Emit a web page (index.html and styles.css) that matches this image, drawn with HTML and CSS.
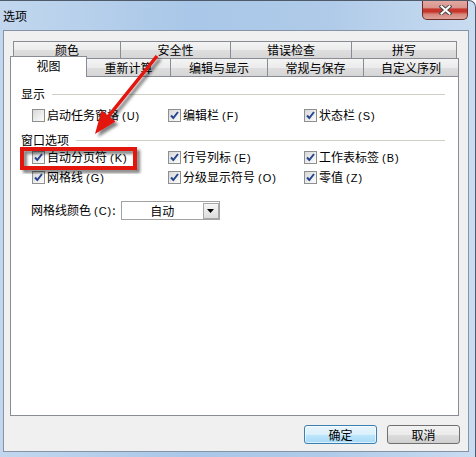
FILE: index.html
```html
<!DOCTYPE html>
<html lang="zh-CN">
<head>
<meta charset="utf-8">
<title>选项</title>
<link rel="stylesheet" href="styles.css">
</head>
<body>
<div class="window">
  <div class="titlebar">
    <span class="title">选项</span>
    <div class="close">
      <svg width="13" height="10" viewBox="0 0 13 10">
        <path d="M2.5 1.5 L10.5 8.5 M10.5 1.5 L2.5 8.5" stroke="#4a4a4a" stroke-width="4" stroke-linecap="square"/>
        <path d="M2.5 1.5 L10.5 8.5 M10.5 1.5 L2.5 8.5" stroke="#fff" stroke-width="2" stroke-linecap="square"/>
      </svg>
    </div>
  </div>
  <div class="client">
    <div class="tabs">
      <div class="row-back">
        <div class="tab">颜色</div>
        <div class="tab">安全性</div>
        <div class="tab">错误检查</div>
        <div class="tab">拼写</div>
      </div>
      <div class="row-front">
        <div class="tab active">视图</div>
        <div class="tab">重新计算</div>
        <div class="tab">编辑与显示</div>
        <div class="tab">常规与保存</div>
        <div class="tab">自定义序列</div>
      </div>
      <div class="panel">
        <div class="heading"><span>显示</span><span class="rule"></span></div>
        <div class="cbrow first">
          <label class="cb"><span class="box"></span><span class="txt">启动任务窗格<span class="key">(U)</span></span></label>
          <label class="cb"><span class="box"><svg width="11" height="11" viewBox="0 0 11 11"><path d="M2 5.5 L4.3 8 L9 2" fill="none" stroke="#26458f" stroke-width="2"/></svg></span><span class="txt">编辑栏<span class="key">(F)</span></span></label>
          <label class="cb"><span class="box"><svg width="11" height="11" viewBox="0 0 11 11"><path d="M2 5.5 L4.3 8 L9 2" fill="none" stroke="#26458f" stroke-width="2"/></svg></span><span class="txt">状态栏<span class="key">(S)</span></span></label>
        </div>
        <div class="heading second"><span>窗口选项</span><span class="rule"></span></div>
        <div class="cbrow">
          <label class="cb"><span class="box"><svg width="11" height="11" viewBox="0 0 11 11"><path d="M2 5.5 L4.3 8 L9 2" fill="none" stroke="#26458f" stroke-width="2"/></svg></span><span class="txt">自动分页符<span class="key">(K)</span></span></label>
          <label class="cb"><span class="box"><svg width="11" height="11" viewBox="0 0 11 11"><path d="M2 5.5 L4.3 8 L9 2" fill="none" stroke="#26458f" stroke-width="2"/></svg></span><span class="txt">行号列标<span class="key">(E)</span></span></label>
          <label class="cb"><span class="box"><svg width="11" height="11" viewBox="0 0 11 11"><path d="M2 5.5 L4.3 8 L9 2" fill="none" stroke="#26458f" stroke-width="2"/></svg></span><span class="txt">工作表标签<span class="key">(B)</span></span></label>
        </div>
        <div class="cbrow">
          <label class="cb"><span class="box"><svg width="11" height="11" viewBox="0 0 11 11"><path d="M2 5.5 L4.3 8 L9 2" fill="none" stroke="#26458f" stroke-width="2"/></svg></span><span class="txt">网格线<span class="key">(G)</span></span></label>
          <label class="cb"><span class="box"><svg width="11" height="11" viewBox="0 0 11 11"><path d="M2 5.5 L4.3 8 L9 2" fill="none" stroke="#26458f" stroke-width="2"/></svg></span><span class="txt">分级显示符号<span class="key">(O)</span></span></label>
          <label class="cb"><span class="box"><svg width="11" height="11" viewBox="0 0 11 11"><path d="M2 5.5 L4.3 8 L9 2" fill="none" stroke="#26458f" stroke-width="2"/></svg></span><span class="txt">零值<span class="key">(Z)</span></span></label>
        </div>
        <div class="gridcolor">
          <span class="txt">网格线颜色<span class="key">(C)</span>:</span>
          <div class="select">
            <span class="val">自动</span>
            <span class="drop"><svg width="7" height="4" viewBox="0 0 7 4"><path d="M0 0 H7 L3.5 4 Z" fill="#000"/></svg></span>
          </div>
        </div>
      </div>
    </div>
    <div class="buttons">
      <div class="btn default">确定</div>
      <div class="btn">取消</div>
    </div>
  </div>
  <svg class="overlay" width="476" height="457" viewBox="0 0 476 457">
    <defs>
      <filter id="sh" x="-20%" y="-20%" width="150%" height="150%">
        <feDropShadow dx="3" dy="3" stdDeviation="1.6" flood-color="#000" flood-opacity="0.5"/>
      </filter>
    </defs>
    <rect x="22" y="149" width="113" height="19" fill="none" stroke="#e3120f" stroke-width="4" filter="url(#sh)"/>
    <g filter="url(#sh)">
      <line x1="157" y1="56" x2="107" y2="118" stroke="#e3120f" stroke-width="3.5"/>
      <polygon points="95,134 115.5,121.5 101.5,110.5" fill="#e3120f"/>
    </g>
  </svg>
</div>
</body>
</html>
```
FILE: styles.css
```css
body {
  margin: 0;
  font-family: "Noto Sans CJK SC", "Liberation Sans", sans-serif;
  font-size: 12px;
  line-height: 14px;
  color: #000;
}

.window {
  position: relative;
  width: 476px;
  height: 457px;
  box-sizing: border-box;
  display: flex;
  flex-direction: column;
  background: linear-gradient(90deg, #c2d7ee 0%, #a9c7e8 40%, #b0cbe9 70%, #c9dcf1 100%);
  border-top: 1px solid #4f5b6a;
  border-right: 1px solid #4f5b6a;
  border-radius: 0 7px 0 0;
  overflow: hidden;
}

.titlebar {
  height: 29px;
  display: flex;
  justify-content: space-between;
  align-items: flex-start;
}

.title {
  margin: 8px 0 0 3px;
  font-size: 12px;
  line-height: 14px;
}

.close {
  width: 46px;
  height: 20px;
  margin: -1px 7px 0 0;
  box-sizing: border-box;
  border: 1px solid #6d2c27;
  border-top: none;
  border-radius: 0 0 5px 5px;
  background: linear-gradient(#e4aca5 0%, #d9968e 40%, #c8352b 48%, #c5342a 62%, #d6877e 75%, #dea199 100%);
  display: flex;
  align-items: center;
  justify-content: center;
}

.close svg { display: block; }

.client {
  flex: 1;
  margin: 0 6px 5px 3px;
  border: 1px solid #8593a6;
  background: #f0f0f0;
  padding: 10px 9px 7px 6px;
  display: flex;
  flex-direction: column;
}

.tabs {
  flex: 1;
  display: flex;
  flex-direction: column;
}

.row-back {
  display: flex;
  height: 17px;
  margin-left: 3px;
}

.row-front {
  display: flex;
  height: 18px;
  align-items: flex-end;
}

.tab {
  box-sizing: border-box;
  height: 100%;
  border-top: 1px solid #898c95;
  border-left: 1px solid #898c95;
  background: linear-gradient(#f4f4f4 0%, #ebebeb 50%, #dedede 51%, #d6d6d6 100%);
  text-align: center;
  line-height: 16px;
  white-space: nowrap;
}

.row-back .tab:nth-child(1) { width: 107px; }
.row-back .tab:nth-child(2) { width: 110px; }
.row-back .tab:nth-child(3) { width: 121px; }
.row-back .tab:nth-child(4) { width: 106px; border-right: 1px solid #898c95; }

.row-front .tab {
  border-left: none;
  border-right: 1px solid #898c95;
  line-height: 17px;
}

.row-front .tab:nth-child(1) { width: 77px; }
.row-front .tab:nth-child(2) { width: 84px; }
.row-front .tab:nth-child(3) { width: 97px; }
.row-front .tab:nth-child(4) { width: 96px; }
.row-front .tab:nth-child(5) { width: 95px; }

.row-front .tab.active {
  height: 21px;
  margin-bottom: -1px;
  border-left: 1px solid #898c95;
  background: #fff;
  position: relative;
  z-index: 1;
  line-height: 17px;
}

.panel {
  flex: 1;
  border: 1px solid #898c95;
  background: #fff;
  padding: 10px 13px 0 10px;
}

.heading {
  display: flex;
  align-items: center;
  height: 14px;
  line-height: 14px;
}

.heading.second { margin-top: 8px; }

.rule {
  flex: 1;
  margin-left: 7px;
  border-top: 1px solid #cfcfc2;
}

.cbrow {
  display: grid;
  grid-template-columns: 136px 136px 1fr;
  height: 20px;
  align-items: center;
  margin-left: 11px;
}

.cbrow.first { margin-top: 4px; }

.cb {
  display: flex;
  align-items: center;
  white-space: nowrap;
}

.txt {
  white-space: nowrap;
  line-height: 14px;
}

.box {
  width: 13px;
  height: 13px;
  box-sizing: border-box;
  border: 1px solid #8e8f8f;
  background: linear-gradient(135deg, #d8d8d8 0%, #eeeeee 60%, #fbfbfb 100%);
  margin-right: 2px;
  display: flex;
  align-items: center;
  justify-content: center;
}

.box svg { display: block; }

.key {
  font-family: "Liberation Sans", sans-serif;
  font-size: 11px;
  letter-spacing: 1px;
  margin-left: 3px;
}

.gridcolor {
  display: flex;
  align-items: center;
  margin: 14px 0 0 10px;
}

.select {
  margin-left: 5px;
  width: 99px;
  height: 19px;
  box-sizing: border-box;
  border: 1px solid #a2a2a2;
  background: #fff;
  display: flex;
}

.select .val {
  flex: 1;
  text-align: center;
  line-height: 17px;
}

.select .drop {
  width: 16px;
  margin: 1px 0 0 0;
  box-sizing: border-box;
  height: 16px;
  border: 1px solid #a7a7a7;
  background: linear-gradient(#f6f6f6, #dcdcdc);
  display: flex;
  align-items: center;
  justify-content: center;
}

.select .drop svg { display: block; }

.buttons {
  display: flex;
  justify-content: flex-end;
  gap: 10px;
  margin: 9px -1px 0 0;
}

.btn {
  width: 73px;
  height: 19px;
  box-sizing: border-box;
  border: 1px solid #707070;
  border-radius: 3px;
  background: linear-gradient(#f2f2f2 0%, #ebebeb 50%, #dddddd 51%, #cfcfcf 100%);
  text-align: center;
  line-height: 17px;
}

.btn.default {
  border-color: #3c7fb1;
  background: linear-gradient(#eaf6fd 0%, #d9f0fc 50%, #bee6fd 51%, #a7d9f5 100%);
  box-shadow: inset 0 0 0 1px rgba(255, 255, 255, 0.6);
}

.overlay {
  position: absolute;
  left: 0;
  top: -1px;
  pointer-events: none;
}
```
